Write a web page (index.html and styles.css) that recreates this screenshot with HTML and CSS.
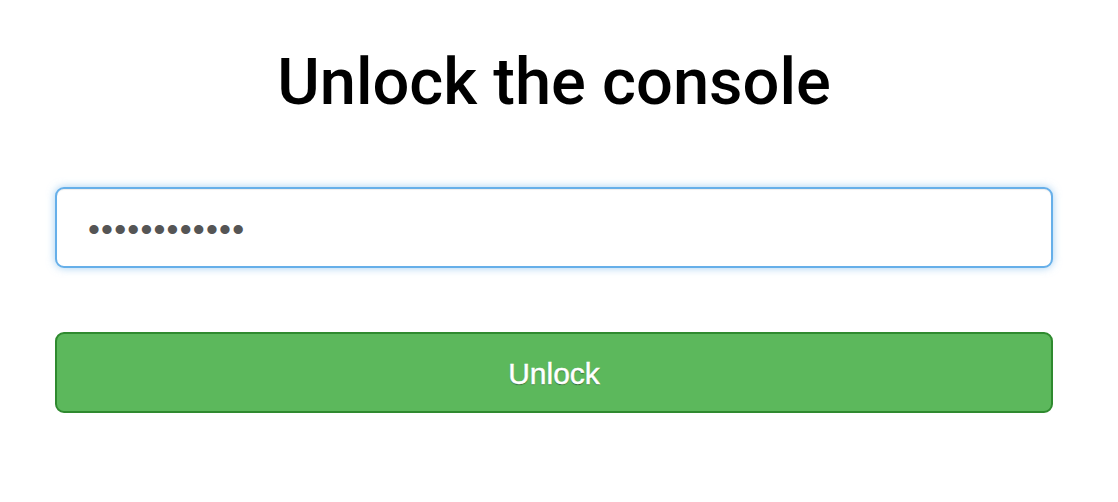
FILE: index.html
```html
<!DOCTYPE html>
<html lang="en">
<head>
<meta charset="utf-8">
<title>Unlock the console</title>
<link rel="stylesheet" href="styles.css">
</head>
<body>
<main class="page">
  <h1 class="title">Unlock the console</h1>
  <form class="unlock-form">
    <input class="pass" type="password" value="supersecret1" autofocus>
    <button class="btn" type="button">Unlock</button>
  </form>
</main>
</body>
</html>
```

FILE: styles.css
```css
html, body {
  margin: 0;
  background: #fff;
}
.page {
  padding: 44px 65px 0 55px;
  display: flex;
  flex-direction: column;
  font-family: "Liberation Sans", Arial, sans-serif;
}
.title {
  margin: 0;
  font-family: Roboto, "Liberation Sans", Arial, sans-serif;
  font-size: 65px;
  line-height: 76px;
  font-weight: 500;
  color: #000;
  text-align: center;
}
.unlock-form {
  display: flex;
  flex-direction: column;
  gap: 64px;
  margin-top: 67px;
}
.pass {
  box-sizing: border-box;
  width: 100%;
  height: 81px;
  margin: 0;
  padding: 4px 31px 0;
  border: 2px solid #66afe9;
  border-radius: 9px;
  outline: none;
  box-shadow: inset 0 1px 1px rgba(0,0,0,.075), 0 0 8px rgba(102,175,233,.6);
  font-family: "Liberation Sans", Arial, sans-serif;
  font-size: 34px;
  color: #555;
  letter-spacing: 1.2px;
  background: #fff;
}
.btn {
  box-sizing: border-box;
  width: 100%;
  height: 81px;
  margin: 0;
  padding-top: 3px;
  border: 2px solid #2f8a2f;
  border-radius: 9px;
  background: #5cb85c;
  color: #fff;
  font-family: "Liberation Sans", Arial, sans-serif;
  font-size: 30px;
  -webkit-text-stroke: 0.5px #fff;
  text-shadow: 0 1px 1px rgba(0,0,0,.45);
  cursor: pointer;
}
```
